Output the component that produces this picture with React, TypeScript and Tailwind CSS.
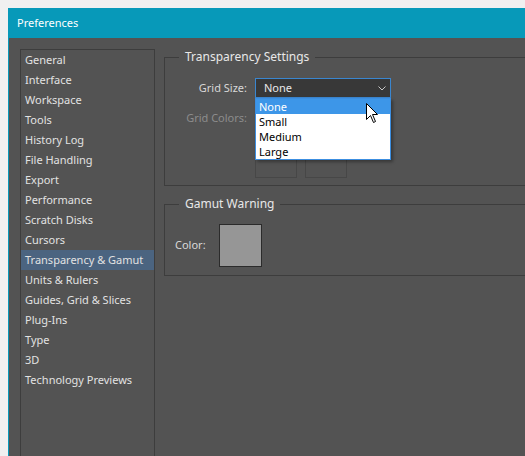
import React from "react";

const items = [
  "General",
  "Interface",
  "Workspace",
  "Tools",
  "History Log",
  "File Handling",
  "Export",
  "Performance",
  "Scratch Disks",
  "Cursors",
  "Transparency & Gamut",
  "Units & Rulers",
  "Guides, Grid & Slices",
  "Plug-Ins",
  "Type",
  "3D",
  "Technology Previews",
];

const font = { fontFamily: '"Noto Sans", "Open Sans", sans-serif' };

export default function App() {
  return (
    <div
      className="w-[525px] h-[456px] overflow-hidden bg-[#f0f0f0] pl-2 pt-2"
      style={font}
    >
      <div className="w-[560px] h-[460px] flex flex-col border-l border-[#0799b9]">
        <div className="h-[30px] shrink-0 bg-[#0799b9] flex items-center pl-2 pt-px text-[11px] text-white">
          Preferences
        </div>
        <div className="flex-1 bg-[#535353] flex pt-[11px] pl-[11px]">
          <div className="w-[135px] shrink-0 border border-[#3d3d3d] text-[11px] text-[#e2e2e2]">
            {items.map((it) => (
              <div
                key={it}
                className={
                  it === "Transparency & Gamut"
                    ? "h-[20px] leading-[20px] pl-[4px] bg-[#4b6480] whitespace-nowrap"
                    : "h-[20px] leading-[20px] pl-[4px] whitespace-nowrap"
                }
              >
                {it}
              </div>
            ))}
          </div>
          <div className="flex-1 ml-[9px] flex flex-col">
            <fieldset className="border border-[#3d3d3d] pt-[13px] pb-[7px] m-0 px-0">
              <legend className="ml-[14px] px-[6px] text-[12px] leading-[16px] text-[#e8e8e8]">
                Transparency Settings
              </legend>
              <div className="flex items-center h-[20px]">
                <div className="w-[82px] text-right text-[11px] text-[#d8d8d8]">
                  Grid Size:
                </div>
                <div className="ml-[8px] relative">
                  <div className="w-[136px] h-[20px] border border-[#3a86cf] bg-[#383838] flex items-center justify-between pl-[8px] pr-[4px] text-[11px] text-[#e8e8e8]">
                    <span>None</span>
                    <svg width="8" height="5" viewBox="0 0 8 5">
                      <polyline
                        points="0.5,0.5 4,4 7.5,0.5"
                        fill="none"
                        stroke="#c8c8c8"
                        strokeWidth="1"
                      />
                    </svg>
                  </div>
                  <div className="absolute left-0 top-[20px] w-[136px] z-10 bg-white border border-[#3c8ee0] shadow-[2px_2px_3px_rgba(0,0,0,0.35)] text-[11px] text-black">
                    <div className="h-[15px] leading-[15px] pl-[3px] bg-[#3d96e8] text-white">
                      None
                    </div>
                    <div className="h-[15px] leading-[15px] pl-[3px]">Small</div>
                    <div className="h-[15px] leading-[15px] pl-[3px]">Medium</div>
                    <div className="h-[15px] leading-[15px] pl-[3px]">Large</div>
                  </div>
                  <svg
                    className="absolute left-[111px] top-[25px] z-20"
                    width="13"
                    height="21"
                    viewBox="0 0 13 21"
                  >
                    <path
                      d="M0.5 0.5 L0.5 16.5 L4.5 12.5 L7.5 19.5 L9.5 18.5 L6.5 11.5 L11.5 11.5 Z"
                      fill="white"
                      stroke="black"
                      strokeWidth="1"
                      strokeLinejoin="miter"
                    />
                  </svg>
                </div>
              </div>
              <div className="flex items-center h-[20px] mt-[10px]">
                <div className="w-[82px] text-right text-[11px] text-[#8c8c8c]">
                  Grid Colors:
                </div>
                <div className="ml-[8px] w-[136px] h-[20px] border border-[#4a4a4a]" />
              </div>
              <div className="flex gap-[8px] ml-[90px] mt-[8px]">
                <div className="w-[42px] h-[42px] border border-[#474747]" />
                <div className="w-[42px] h-[42px] border border-[#474747]" />
              </div>
            </fieldset>
            <fieldset className="border border-[#3d3d3d] mt-[10px] pt-[12px] pb-[8px] m-0 px-0">
              <legend className="ml-[14px] px-[6px] text-[12px] leading-[16px] text-[#e8e8e8]">
                Gamut Warning
              </legend>
              <div className="flex items-center pl-[10px]">
                <div className="text-[11px] text-[#d8d8d8] w-[44px]">Color:</div>
                <div className="w-[43px] h-[43px] bg-[#969696] border border-[#2b2b2b]" />
              </div>
            </fieldset>
          </div>
        </div>
      </div>
    </div>
  );
}
